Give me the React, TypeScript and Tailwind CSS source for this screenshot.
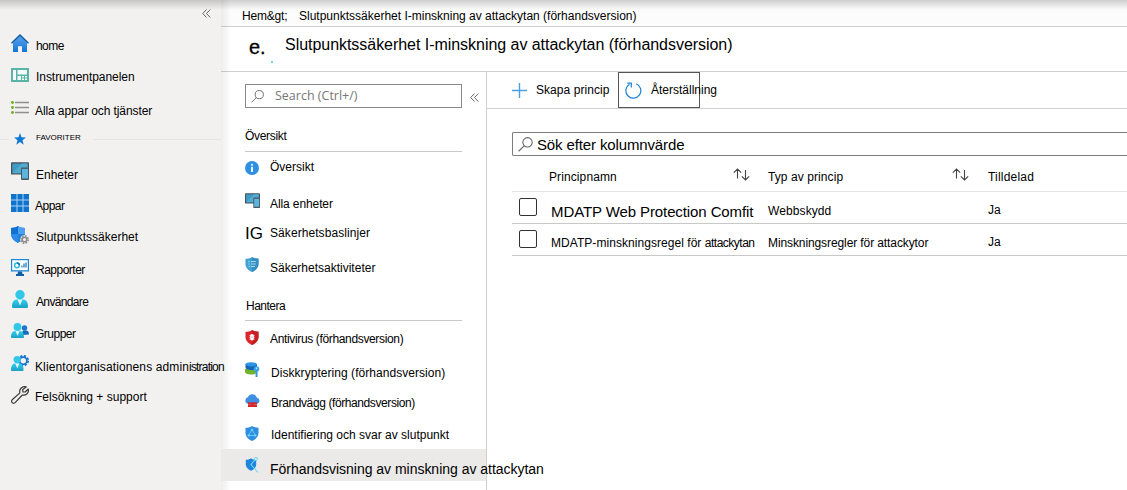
import type { ReactNode } from "react";

const Home = () => (
  <svg width="18" height="18" viewBox="0 0 18 18">
    <defs>
      <linearGradient id="homeFill" x1="0" y1="0" x2="0" y2="1">
        <stop offset="0" stopColor="#5ea0ef" />
        <stop offset="1" stopColor="#0f78d4" />
      </linearGradient>
    </defs>
    <path d="M2 8.500 9 2l7 6.500V18h-5v-5.500H7V18H2z" fill="url(#homeFill)" />
    <path d="M0 8.800 9 0l9 8.800-1 .9L9 2.200 1 9.700z" fill="#0f5fa8" />
    <path d="M7 12.500h4V18H7z" fill="#f2f1f0" />
  </svg>
);

const Dashboard = () => (
  <svg width="18" height="14" viewBox="0 0 18 14">
    <path d="M0 0h18v14H0z" fill="#5bb5a6" />
    <path d="M2 2h3v10H2zM6.500 2H16v4.500H6.500zM6.500 8H10v4H6.500zM11 8h2v1.500h-2zM14 8h2v1.500h-2zM11 10.500h2V12h-2zM14 10.500h2V12h-2z" fill="#f4fbfa" />
  </svg>
);

const List = () => (
  <svg width="18" height="13" viewBox="0 0 18 13">
    <path d="M4 1.500h14M4 6.500h14M4 11.500h14" stroke="#8f8f8f" strokeWidth="1.300" />
    <g fill="#6bb021">
      <circle cx="1.500" cy="1.500" r="1.400" />
      <circle cx="1.500" cy="6.500" r="1.400" />
      <circle cx="1.500" cy="11.500" r="1.400" />
    </g>
  </svg>
);

const Star = () => (
  <svg width="12" height="12" viewBox="0 0 12 12">
    <path d="M6 0 7.500 4.200 12 4.400 8.500 7.200 9.700 11.700 6 9.100 2.300 11.700 3.500 7.200 0 4.400 4.500 4.200z" fill="#0f78d4" />
  </svg>
);

const Devices = ({ size }: { size: number }) => (
  <svg width={size} height={size} viewBox="0 0 18 18">
    <path d="M1 .3h16a1 1 0 0 1 1 1V12.500H0V1.300a1 1 0 0 1 1-1z" fill="#46525c" />
    <path d="M1.300 1.600h15.200v9.600H1.300z" fill="#3f9ac4" />
    <path d="M1.300 11.200 11 1.600h5.500v9.600z" fill="#51aad0" />
    <rect x="10" y="5.500" width="8" height="12.500" rx="1" fill="#4a5660" />
    <path d="M11 6.900h6v9.600h-6z" fill="#5ab6dc" />
  </svg>
);

const Apps = () => (
  <svg width="18" height="18" viewBox="0 0 18 18">
    <path d="M0 0h18v18H0z" fill="#0f73cc" />
    <path d="M6 0v18M12 0v18M0 6h18M0 12h18" stroke="#a9d3f5" strokeWidth="1" />
  </svg>
);

const ShieldGear = () => (
  <svg width="18" height="18" viewBox="0 0 18 18">
    <path d="M7 0c2 1.600 4.500 1.900 7 2v6c0 4.500-4 7.500-7 9-3-1.500-7-4.500-7-9V2c2.500-.1 5-.4 7-2z" fill="#1f86dd" />
    <path d="M7 0c2 1.600 4.500 1.900 7 2v6H7z" fill="#4f9ff0" />
    <path d="M7 8v9c-3-1.500-6.500-4.500-7-9z" fill="#2f8bea" />
    <path d="M7 0v8H0V2c2.500-.1 5-.4 7-2z" fill="#0f72d0" />
    <circle cx="13.500" cy="13.500" r="4.400" fill="#f2f1f0" />
    <circle cx="13.500" cy="13.500" r="3.700" fill="none" stroke="#8c8c8c" strokeWidth="1.500" strokeDasharray="1.700 1.206" />
    <circle cx="13.500" cy="13.500" r="2.300" fill="none" stroke="#8c8c8c" strokeWidth="1.600" />
  </svg>
);

const Report = () => (
  <svg width="18" height="17" viewBox="0 0 18 17">
    <path d="M0 0h18v12.500H0z" fill="#1b86d6" />
    <path d="M1.200 1.200h15.600v10H1.200z" fill="#fff" />
    <circle cx="6" cy="6.300" r="2.400" fill="none" stroke="#32bedd" strokeWidth="1.500" />
    <path d="M6 3.900a2.400 2.400 0 0 1 2.400 2.400" fill="none" stroke="#0f6cbd" strokeWidth="1.500" />
    <path d="M11 8.500V6.500M13 8.500V4.500M15 8.500V3.500" stroke="#2c7fc0" strokeWidth="1.300" />
    <path d="M7 12.500h4l.5 2.500H13v2H5v-2h1.500z" fill="#0f5fa6" />
  </svg>
);

const Cyan = ({ id }: { id: string }) => (
  <defs>
    <linearGradient id={id} x1="0" y1="0" x2="0" y2="1">
      <stop offset="0" stopColor="#32cfee" />
      <stop offset="1" stopColor="#1a9fc4" />
    </linearGradient>
  </defs>
);

const User = () => (
  <svg width="18" height="18" viewBox="0 0 18 18">
    <Cyan id="userFill" />
    <path d="M1 16.500C1 12 3 9.500 6 9.500h6c3 0 5 2.500 5 7 0 1-.6 1.500-1.500 1.500h-13C1.600 18 1 17.500 1 16.500z" fill="url(#userFill)" />
    <path d="M6.500 9.500h5L9 15.500z" fill="#e2f7fc" />
    <circle cx="9" cy="4.800" r="4.700" fill="#34c8e8" />
  </svg>
);

const Group = () => (
  <svg width="18" height="16" viewBox="0 0 18 16">
    <Cyan id="groupFill" />
    <path d="M11 12c0-3 .5-4.500 2-4.500h2c2 0 3 1.500 3 4z" fill="#0f6cbd" />
    <circle cx="13.500" cy="5" r="2.700" fill="#1877d2" />
    <path d="M0 14c0-4 1.500-6 4-6h5c2.500 0 4 2 4 6 0 .7-.5 1-1 1H1c-.6 0-1-.4-1-1z" fill="url(#groupFill)" />
    <path d="M4.500 8h4l-2 5z" fill="#e2f7fc" />
    <circle cx="6.500" cy="4" r="3.900" fill="#34c8e8" />
  </svg>
);

const Tenant = () => (
  <svg width="18" height="16" viewBox="0 0 18 16">
    <Cyan id="tenantFill" />
    <circle cx="12.300" cy="5.700" r="4.900" fill="none" stroke="#1674cf" strokeWidth="1.700" strokeDasharray="2.200 1.648" />
    <circle cx="12.300" cy="5.700" r="3.600" fill="none" stroke="#1674cf" strokeWidth="1.700" />
    <path d="M0 15c0-4 1.500-6.500 4-6.500h4.500c2.500 0 4 2.500 4 6.500 0 .7-.5 1-1 1H1c-.6 0-1-.4-1-1z" fill="url(#tenantFill)" />
    <path d="M4.300 8.500h4l-2 5z" fill="#e2f7fc" />
    <circle cx="6.200" cy="4.600" r="3.700" fill="#34c8e8" />
  </svg>
);

const Wrench = () => (
  <svg width="18" height="18" viewBox="0 0 18 18">
    <path
      d="M15.200.9a4.900 4.900 0 0 0-6.300 6L1.200 13.800a1.900 1.900 0 0 0 2.900 2.900L11.300 9a4.800 4.800 0 0 0 5.900-6l-3 3-2.300-.1-.2-2.300z"
      fill="none"
      stroke="#3a3a3a"
      strokeWidth="1.200"
      strokeLinejoin="round"
    />
  </svg>
);

const Info = () => (
  <svg width="14" height="14" viewBox="0 0 14 14">
    <circle cx="7" cy="7" r="7" fill="#2f8fe3" />
    <circle cx="7" cy="3.700" r="1" fill="#fff" />
    <path d="M6.100 5.700h1.800V11H6.100z" fill="#fff" />
  </svg>
);

const shieldPath = "M7 0c2 1.500 4.500 1.700 6.500 1.800V7c0 4-3.500 6.700-6.500 8C4 13.700.5 11 .5 7V1.800C2.500 1.700 5 1.500 7 0z";

const ShieldTasks = () => (
  <svg width="14" height="15" viewBox="0 0 14 15">
    <path d={shieldPath} fill="#3fa0d2" />
    <path d="M7 0c2 1.500 4.500 1.700 6.500 1.800V7c0 4-3.500 6.700-6.500 8z" fill="#358dc0" />
    <path d="M3.200 4.500h1.500M6 4.500h4.800M3.200 7h1.500M6 7h4.800M3.700 9.500h1.500M6 9.500h4" stroke="#a8dcf4" strokeWidth="1.100" />
  </svg>
);

const ShieldVirus = () => (
  <svg width="14" height="15" viewBox="0 0 14 15">
    <path d={shieldPath} fill="#d9262a" />
    <path d="M7 0c2 1.500 4.500 1.700 6.500 1.800V7c0 4-3.500 6.700-6.500 8z" fill="#c41e23" />
    <ellipse cx="7" cy="7.300" rx="2.100" ry="3.200" fill="#fff" />
    <path d="M4 5l6 4.500M10 5 4 9.500M3.800 7.300h6.400" stroke="#f6b8b8" strokeWidth=".6" />
  </svg>
);

const Disk = () => (
  <svg width="15" height="15" viewBox="0 0 15 15">
    <path d="M0 7v3c0 1.500 3 2.500 6 2.500S12 11.500 12 10V7z" fill="#6fb52c" />
    <path d="M.5 2v3.500C.5 7 3.200 8 6.300 8S12 7 12 5.500V2z" fill="#1566b5" />
    <ellipse cx="6.200" cy="2.300" rx="5.800" ry="2.100" fill="#2d93e6" />
    <circle cx="11.500" cy="7" r="2.800" fill="#35a3e8" />
    <path d="M10.600 9h1.900v6h-1.900z" fill="#2f95e0" />
    <circle cx="11.500" cy="6.300" r=".8" fill="#e6f4fd" />
  </svg>
);

const CloudWall = () => (
  <svg width="15" height="14" viewBox="0 0 15 14">
    <path d="M3.300 9.800a3.300 3.300 0 0 1-.4-6.500 4.700 4.700 0 0 1 9 .4 3.100 3.100 0 0 1 .2 6.100z" fill="#3f8fe4" />
    <path d="M3 8.300h9V13H3z" fill="#cf262c" />
    <path d="M3 10.600h3.500M8.500 10.600H12" stroke="#ea7073" strokeWidth=".7" />
  </svg>
);

const ShieldNodes = () => (
  <svg width="14" height="15" viewBox="0 0 14 15">
    <path d={shieldPath} fill="#2f8de2" />
    <path d="M7 3.500 3.500 9.500h7z" fill="none" stroke="#5fd0f5" strokeWidth=".9" />
    <g fill="#7fe0fa">
      <circle cx="7" cy="3.700" r="1" />
      <circle cx="3.600" cy="9.500" r="1.100" />
      <circle cx="10.400" cy="9.500" r="1.100" />
    </g>
  </svg>
);

const ShieldAttack = () => (
  <svg width="14" height="16" viewBox="0 0 14 16">
    <path d="M6 1.200C7.500 2.400 9.500 2.800 11.200 2.800V7.500c0 3-2.700 5.200-5.200 6.200-2.500-1-5.200-3.200-5.200-6.200V2.800C2.500 2.800 4.500 2.400 6 1.200z" fill="#1f84db" />
    <path d="M9.800 3 6 7.500 13 15.500" fill="none" stroke="#6fd8f5" strokeWidth="1.100" />
    <circle cx="10.900" cy="1.900" r="1.500" fill="#e8fafe" stroke="#4fd0f2" strokeWidth=".9" />
  </svg>
);

const Magnifier = ({ size }: { size: number }) => (
  <svg width={size} height={size} viewBox="0 0 14 14" fill="none" stroke="#666" strokeWidth="1">
    <circle cx="8.900" cy="5" r="4.400" />
    <path d="M5.700 8.200.6 13.300" />
  </svg>
);

const Chevrons = () => (
  <svg width="9" height="9" viewBox="0 0 9 9" fill="none" stroke="#666" strokeWidth="1">
    <path d="M4.500.5.700 4.500l3.800 4M8.300.5 4.500 4.500l3.800 4" />
  </svg>
);

const Sort = () => (
  <svg className="mt-0.5" width="17" height="13" viewBox="0 0 17 13" fill="none" stroke="#444" strokeWidth="1.100">
    <path d="M4.500 10.500V1M.8 4.700 4.500 1l3.700 3.700M12.500 2v10M8.800 8.300l3.700 3.700 3.700-3.700" />
  </svg>
);

const Plus = () => (
  <svg width="15" height="15" viewBox="0 0 15 15">
    <path d="M7.500 0v15M0 7.500h15" stroke="#4a9fe2" strokeWidth="1.400" />
  </svg>
);

const Refresh = () => (
  <svg className="shrink-0" width="17" height="17" viewBox="0 0 17 17" fill="none" stroke="#1d80d3" strokeWidth="1.200">
    <path d="M11.200 1.700a7.500 7.500 0 1 1-6.700.5" />
    <path d="M2.300 1.200h4v4.200" />
  </svg>
);

type Item = { icon: ReactNode; label: ReactNode; text: string };

const sidebar: Item[] = [
  { icon: <Home />, label: "home", text: "pt-[5px] pl-[7px] tracking-[-0.55px]" },
  { icon: <Dashboard />, label: "Instrumentpanelen", text: "pt-1 pl-[7px] tracking-[-0.05px]" },
  { icon: <List />, label: "Alla appar och tjänster", text: "pt-2 pl-1.5 tracking-[-0.1px]" },
  { icon: <Star />, label: "FAVORITER", text: "pb-0.5 pl-[7px] text-[8px]" },
  { icon: <Devices size={18} />, label: "Enheter", text: "pt-2 pl-[7px]" },
  { icon: <Apps />, label: "Appar", text: "pt-1.5 pl-1.5 tracking-[-0.5px]" },
  { icon: <ShieldGear />, label: "Slutpunktssäkerhet", text: "pt-1 pl-[7px]" },
  { icon: <Report />, label: "Rapporter", text: "pt-1.5 pl-[7px] tracking-[-0.5px]" },
  { icon: <User />, label: "Användare", text: "pt-1.5 pl-[7px] tracking-[-0.65px]" },
  { icon: <Group />, label: "Grupper", text: "pt-1.5 pl-1.5 tracking-[-0.5px]" },
  {
    icon: <Tenant />,
    label: (
      <>
        Klientorganisationens admin<span className="tracking-[-0.8px]">istration</span>
      </>
    ),
    text: "pt-2 pl-1.5 tracking-[0.12px]",
  },
  { icon: <Wrench />, label: "Felsökning + support", text: "pt-1 pl-1.5" },
];

const overview: Item[] = [
  { icon: <Info />, label: "Översikt", text: "pb-0.5" },
  { icon: <Devices size={15} />, label: "Alla enheter", text: "pt-[7px] tracking-[-0.1px]" },
  { icon: <span className="pt-0.5 text-[17px] leading-none">IG</span>, label: "Säkerhetsbaslinjer", text: "pt-px tracking-[0.07px]" },
  { icon: <ShieldTasks />, label: "Säkerhetsaktiviteter", text: "pt-[7px]" },
];

const manage: Item[] = [
  { icon: <ShieldVirus />, label: "Antivirus (förhandsversion)", text: "pt-1 tracking-[-0.35px]" },
  { icon: <Disk />, label: "Diskkryptering (förhandsversion)", text: "pt-2 pl-px tracking-[0.05px]" },
  { icon: <CloudWall />, label: "Brandvägg (förhandsversion)", text: "pt-1 pl-px tracking-[-0.4px]" },
  { icon: <ShieldNodes />, label: "Identifiering och svar av slutpunkt", text: "pt-[3px] pl-px" },
  { icon: <ShieldAttack />, label: "Förhandsvisning av minskning av attackytan", text: "pt-[7px] text-[14px] tracking-[-0.02px]" },
];

const MenuRow = ({ item, selected }: { item: Item; selected?: boolean }) => (
  <li className={selected ? "flex h-8 items-center bg-[#ebeae9] pl-6" : "flex h-8 items-center pl-6"}>
    <span className="flex w-[25px] shrink-0 items-center">{item.icon}</span>
    <span className={item.text}>{item.label}</span>
  </li>
);

const rows = [
  {
    name: "MDATP Web Protection Comfit",
    nameClass: "pt-2 pl-0.5 text-[15px] tracking-[-0.1px]",
    type: "Webbskydd",
    typeClass: "pt-1.5 tracking-[0.1px]",
  },
  {
    name: (
      <>
        MDATP-minskningsregel för <span className="tracking-[-0.5px]">attackytan</span>
      </>
    ),
    nameClass: "pt-1.5 pl-0.5 tracking-[0.05px]",
    type: "Minskningsregler för attackytor",
    typeClass: "pt-1.5 tracking-[-0.1px]",
  },
];

export default function App() {
  return (
    <div className="relative flex h-[490px] w-full overflow-hidden bg-white font-['Liberation_Sans',Arial,sans-serif] text-[12px] leading-4 whitespace-nowrap text-black">
      <nav className="relative z-10 h-full w-[221px] shrink-0 bg-[#f2f1f0]">
        <div className="flex h-[27px] justify-end pt-[9px] pr-2.5">
          <Chevrons />
        </div>
        <ul>
          {sidebar.map((item, i) => (
            <li key={i} className="flex h-8 items-center">
              {item.label === "FAVORITER" && <span className="h-px w-[9px] bg-[#e6e5e4]" />}
              <span className={item.label === "FAVORITER" ? "flex w-[22px] shrink-0 justify-center" : "ml-[11px] flex w-[18px] shrink-0 justify-center"}>
                {item.icon}
              </span>
              <span className={item.label === "FAVORITER" ? "-ml-0.5 flex flex-1 items-center" : "flex"}>
                <span className={item.text}>{item.label}</span>
                {item.label === "FAVORITER" && <span className="ml-3 h-px flex-1 bg-[#e6e5e4]" />}
              </span>
            </li>
          ))}
        </ul>
      </nav>

      <main className="flex min-w-0 flex-1 flex-col">
        <div className="flex h-[27px] shrink-0 items-end border-b border-[#d0d0d0] bg-[#fcfcfc] pb-0.5 pl-[21px]">
          <span className="w-[57px] tracking-[-0.2px]">Hem&amp;gt;</span>
          <span>Slutpunktssäkerhet I-minskning av attackytan (förhandsversion)</span>
        </div>
        <header className="flex h-[45px] shrink-0 items-start border-b border-[#d0d0d0] pl-7">
          <span className="w-[22px] pt-2 text-[20px] leading-6 tracking-[-0.2px] [-webkit-text-stroke:0.3px_black]">e.</span>
          <span className="mt-[34px] size-[2px] bg-[#6fdcf5]" />
          <h1 className="pt-2 pl-[12px] text-[16px] leading-5 tracking-[-0.04px]">
            Slutpunktssäkerhet I-minskning av attackytan (förhandsversion)
          </h1>
        </header>

        <div className="flex min-h-0 flex-1">
          <aside className="relative z-10 w-[266px] shrink-0 border-r border-[#d0d0d0]">
            <div className="mt-3 flex h-[24px] items-center pl-6">
              <div className="flex h-6 w-[217px] items-center border border-[#8a8886] pl-[5px] font-['Open_Sans','Noto_Sans',sans-serif] text-[12.5px] text-[#767676]">
                <Magnifier size={13} />
                <span className="pl-[11px]">Search (Ctrl+/)</span>
              </div>
              <span className="pt-0.5 pl-2">
                <Chevrons />
              </span>
            </div>
            <h2 className="mt-5 ml-6 h-6 w-[217px] border-b border-[#c8c8c8] tracking-[-0.3px]">Översikt</h2>
            <ul>
              {overview.map((item, i) => (
                <MenuRow key={i} item={item} />
              ))}
            </ul>
            <h2 className="mt-[17px] ml-6 h-[24px] w-[217px] border-b border-[#c8c8c8] pt-px pl-px tracking-[-0.5px]">Hantera</h2>
            <ul>
              {manage.map((item, i) => (
                <MenuRow key={i} item={item} selected={i === manage.length - 1} />
              ))}
            </ul>
          </aside>

          <section className="min-w-0 flex-1">
            <div className="flex h-[37px] items-center border-b border-[#d0d0d0] pl-[25px]">
              <Plus />
              <span className="w-[91px] pl-[9px] tracking-[0.06px]">Skapa princip</span>
              <div className="flex h-9 w-[82px] items-center border border-[#555] pl-[6px]">
                <Refresh />
                <span className="pl-[9px]">Återställning</span>
              </div>
            </div>
            <div className="mt-[23px] ml-[25px]">
              <div className="flex h-6 items-center rounded-l-[2px] border border-r-0 border-[#7d7d7d] pl-[5px]">
                <Magnifier size={15} />
                <span className="pt-px pl-1 text-[15px] tracking-[-0.13px]">Sök efter kolumnvärde</span>
              </div>
              <div className="grid h-9 grid-cols-[37px_184px_35px_184px_36px_1fr] items-center border-b border-[#e4e4e4]">
                <span />
                <span className="pt-[7px] tracking-[0.1px]">Principnamn</span>
                <Sort />
                <span className="pt-[7px] tracking-[0.08px]">Typ av princip</span>
                <Sort />
                <span className="pt-[7px] tracking-[0.2px]">Tilldelad</span>
              </div>
              {rows.map((row, i) => (
                <div key={i} className="grid h-8 grid-cols-[37px_219px_220px_1fr] items-center border-b border-[#c8c8c8]">
                  <span className="mb-px ml-[7px] size-[18px] rounded-[2px] border border-[#333]" />
                  <span className={row.nameClass}>{row.name}</span>
                  <span className={row.typeClass}>{row.type}</span>
                  <span className="pt-1">Ja</span>
                </div>
              ))}
            </div>
          </section>
        </div>
      </main>
      <div className="pointer-events-none absolute top-0 left-[221px] h-full w-2.5 bg-linear-to-r from-black/7 to-transparent" />
      <div className="pointer-events-none absolute inset-x-0 top-0 z-20 h-2.5 bg-linear-to-b from-black/18 to-transparent" />
    </div>
  );
}
